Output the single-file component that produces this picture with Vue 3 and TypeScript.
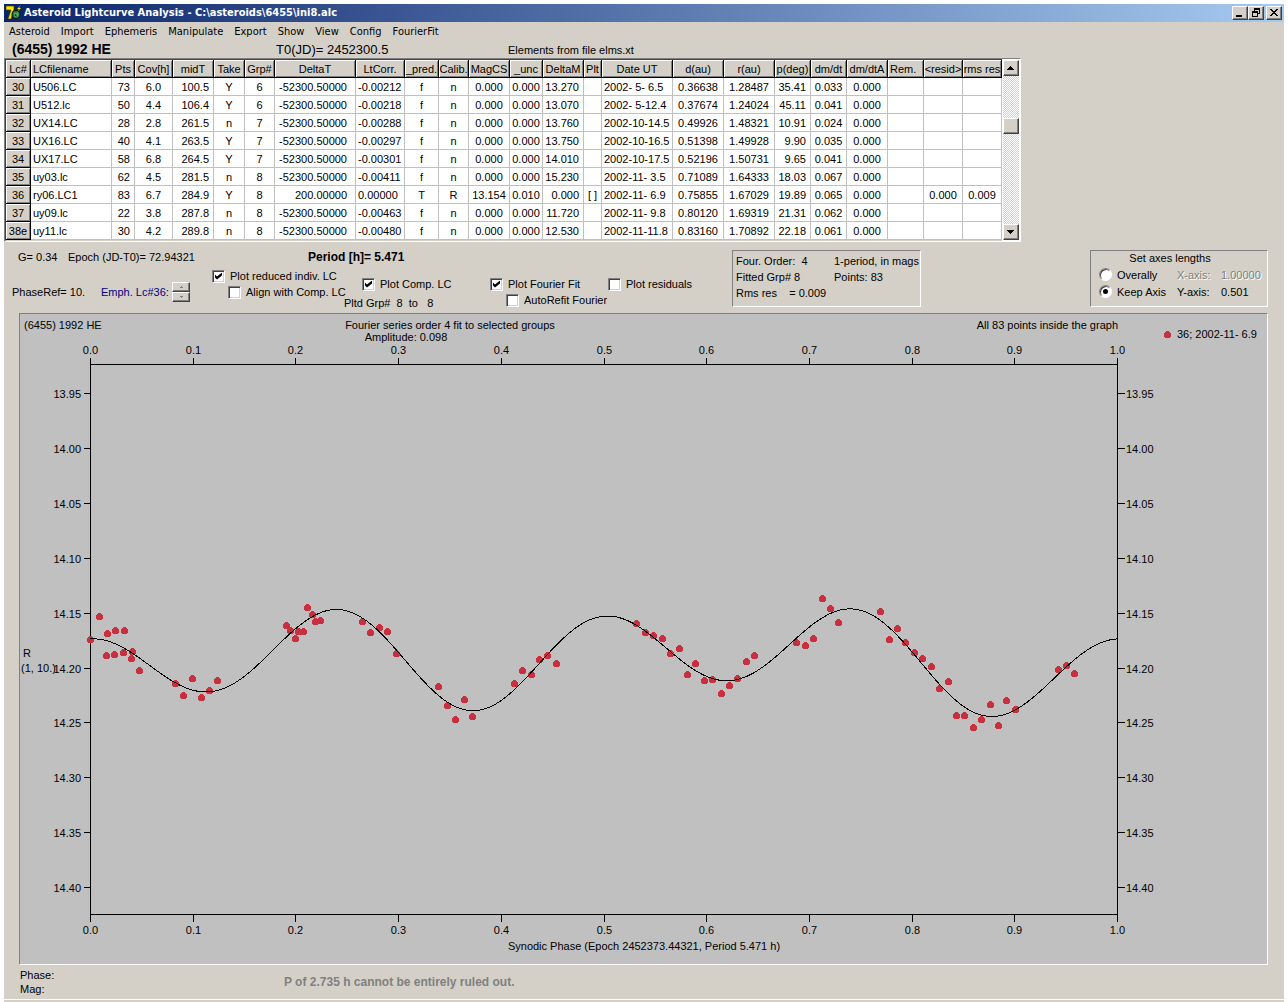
<script setup lang="ts">
import { ref } from 'vue'

interface Column {
  key: string
  title: string
  width: number
  align: string
}

const menus: string[] = ['Asteroid', 'Import', 'Ephemeris', 'Manipulate', 'Export', 'Show', 'View', 'Config', 'FourierFit']

const columns: Column[] = [
  { key: 'lc', title: 'Lc#', width: 25, align: 'center' },
  { key: 'file', title: 'LCfilename', width: 81, align: 'left' },
  { key: 'pts', title: 'Pts', width: 23, align: 'right' },
  { key: 'cov', title: 'Cov[h]', width: 38, align: 'center' },
  { key: 'mid', title: 'midT', width: 41, align: 'right' },
  { key: 'take', title: 'Take', width: 31, align: 'center' },
  { key: 'grp', title: 'Grp#', width: 30, align: 'center' },
  { key: 'dt', title: 'DeltaT', width: 81, align: 'wide' },
  { key: 'lt', title: 'LtCorr.', width: 49, align: 'lead' },
  { key: 'pred', title: '_pred.', width: 34, align: 'center' },
  { key: 'calib', title: 'Calib.', width: 30, align: 'center' },
  { key: 'magcs', title: 'MagCS', width: 41, align: 'center' },
  { key: 'unc', title: '_unc', width: 33, align: 'center' },
  { key: 'dm', title: 'DeltaM', width: 41, align: 'right' },
  { key: 'plt', title: 'Plt', width: 18, align: 'center' },
  { key: 'date', title: 'Date UT', width: 71, align: 'lead' },
  { key: 'd', title: 'd(au)', width: 51, align: 'center' },
  { key: 'r', title: 'r(au)', width: 51, align: 'center' },
  { key: 'p', title: 'p(deg)', width: 36, align: 'right' },
  { key: 'dmdt', title: 'dm/dt', width: 36, align: 'center' },
  { key: 'dmdta', title: 'dm/dtA', width: 41, align: 'center' },
  { key: 'rem', title: 'Rem.', width: 36, align: 'left' },
  { key: 'resid', title: '<resid>', width: 39, align: 'center' },
  { key: 'rms', title: 'rms res', width: 39, align: 'center' },
]

const rows: string[][] = [
  ['30', 'U506.LC', '73', '6.0', '100.5', 'Y', '6', '-52300.50000', '-0.00212', 'f', 'n', '0.000', '0.000', '13.270', '', '2002- 5- 6.5', '0.36638', '1.28487', '35.41', '0.033', '0.000', '', '', ''],
  ['31', 'U512.lc', '50', '4.4', '106.4', 'Y', '6', '-52300.50000', '-0.00218', 'f', 'n', '0.000', '0.000', '13.070', '', '2002- 5-12.4', '0.37674', '1.24024', '45.11', '0.041', '0.000', '', '', ''],
  ['32', 'UX14.LC', '28', '2.8', '261.5', 'n', '7', '-52300.50000', '-0.00288', 'f', 'n', '0.000', '0.000', '13.760', '', '2002-10-14.5', '0.49926', '1.48321', '10.91', '0.024', '0.000', '', '', ''],
  ['33', 'UX16.LC', '40', '4.1', '263.5', 'Y', '7', '-52300.50000', '-0.00297', 'f', 'n', '0.000', '0.000', '13.750', '', '2002-10-16.5', '0.51398', '1.49928', '9.90', '0.035', '0.000', '', '', ''],
  ['34', 'UX17.LC', '58', '6.8', '264.5', 'Y', '7', '-52300.50000', '-0.00301', 'f', 'n', '0.000', '0.000', '14.010', '', '2002-10-17.5', '0.52196', '1.50731', '9.65', '0.041', '0.000', '', '', ''],
  ['35', 'uy03.lc', '62', '4.5', '281.5', 'n', '8', '-52300.50000', '-0.00411', 'f', 'n', '0.000', '0.000', '15.230', '', '2002-11- 3.5', '0.71089', '1.64333', '18.03', '0.067', '0.000', '', '', ''],
  ['36', 'ry06.LC1', '83', '6.7', '284.9', 'Y', '8', '200.00000', '0.00000', 'T', 'R', '13.154', '0.010', '0.000', '[ ]', '2002-11- 6.9', '0.75855', '1.67029', '19.89', '0.065', '0.000', '', '0.000', '0.009'],
  ['37', 'uy09.lc', '22', '3.8', '287.8', 'n', '8', '-52300.50000', '-0.00463', 'f', 'n', '0.000', '0.000', '11.720', '', '2002-11- 9.8', '0.80120', '1.69319', '21.31', '0.062', '0.000', '', '', ''],
  ['38e', 'uy11.lc', '30', '4.2', '289.8', 'n', '8', '-52300.50000', '-0.00480', 'f', 'n', '0.000', '0.000', '12.530', '', '2002-11-11.8', '0.83160', '1.70892', '22.18', '0.061', '0.000', '', '', ''],
]

const plotReduced = ref(true)
const alignComp = ref(false)
const plotComp = ref(true)
const plotFit = ref(true)
const autoRefit = ref(false)
const plotResiduals = ref(false)
const axisMode = ref('keep')

// Plot frame in drawing units
const LEFT = 90.5
const RIGHT = 1117.5
const TOP = 364.5
const BOTTOM = 914.5

const phaseTicks = Array.from({ length: 11 }, (_, i) => ({
  x: Math.round(90 + i * 102.7) + 0.5,
  label: (i / 10).toFixed(1),
}))
const magTicks = Array.from({ length: 10 }, (_, i) => ({
  y: Math.round(393 + i * 54.9) + 0.5,
  label: (13.95 + i * 0.05).toFixed(2),
}))

const points: [number, number][] = [
  [99, 616], [107, 633], [115, 630], [124, 630], [90, 639], [106, 655], [114, 654], [123, 652], [132, 651], [131, 658],
  [139, 670], [175, 683], [183, 695], [192, 678], [201, 697], [209, 690], [217, 680], [286, 625], [290, 630], [295, 638],
  [298, 631], [303, 631], [307, 607], [312, 614], [315, 621], [320, 620], [362, 621], [370, 632], [379, 627], [387, 631],
  [396, 653], [438, 686], [447, 705], [455, 719], [464, 699], [472, 716], [514, 683], [522, 670], [531, 674], [539, 659],
  [547, 655], [556, 663], [636, 623], [645, 632], [653, 635], [662, 638], [670, 653], [679, 648], [687, 674], [695, 663],
  [704, 680], [712, 679], [721, 693], [729, 685], [737, 678], [746, 661], [754, 655], [796, 642], [805, 645], [813, 638],
  [822, 598], [830, 608], [838, 622], [880, 611], [889, 639], [897, 628], [905, 642], [914, 652], [922, 658], [931, 666],
  [939, 688], [948, 681], [956, 715], [964, 715], [973, 727], [981, 719], [990, 704], [998, 725], [1006, 700], [1015, 709],
  [1058, 669], [1066, 665], [1074, 673],
]

const normals: [number, number][] = [
  [90, 638.5], [107, 640], [115, 643], [130, 652], [150, 667], [165, 678], [177, 684], [190, 689], [206, 690.7], [217, 690],
  [230, 686], [245, 677], [255, 668], [267, 656], [280, 643], [290, 632], [300, 624], [310, 617], [320, 612.5], [330, 611],
  [338, 610.3], [350, 612.7], [363, 619.3], [377, 629.5], [397, 651], [413, 670], [430, 687], [447, 701], [458, 707.3],
  [473, 710.3], [487, 708], [503, 699.3], [517, 687.7], [532, 672.3], [547, 655], [563, 638.5], [583, 623], [597, 617.7],
  [608, 616.3], [620, 617.7], [636, 623.7], [653, 637], [670, 652.3], [687, 665.3], [707, 676], [727, 680.2], [747, 676.3],
  [763, 666.3], [780, 653.3], [795, 639.3], [810, 627.3], [830, 614.3], [850, 609.3], [867, 611.7], [889, 627.3],
  [897, 635.3], [914, 653.7], [931, 674.3], [940, 685], [957, 701], [973, 712.3], [992, 716.5], [1007, 713.7],
  [1020, 708], [1037, 695.3], [1058, 674], [1073, 660.7], [1090, 648.3], [1105, 640.7], [1117, 638.7],
]

function basis(phase: number): number[] {
  const out = [1]
  for (let k = 1; k <= 4; k++) {
    const a = 2 * Math.PI * k * phase
    out.push(Math.cos(a), Math.sin(a))
  }
  return out
}

// Least squares fit of a fourth order Fourier series
function fitSeries(data: [number, number][]): number[] {
  const n = 9
  const m = Array.from({ length: n }, () => new Array<number>(n + 1).fill(0))
  for (const [x, y] of data) {
    const b = basis((x - LEFT) / (RIGHT - LEFT))
    for (let i = 0; i < n; i++) {
      for (let j = 0; j < n; j++) m[i][j] += b[i] * b[j]
      m[i][n] += b[i] * y
    }
  }
  for (let i = 0; i < n; i++) {
    for (let r = 0; r < n; r++) {
      if (r === i) continue
      const f = m[r][i] / m[i][i]
      for (let c = i; c <= n; c++) m[r][c] -= f * m[i][c]
    }
  }
  return m.map((row, i) => row[n] / row[i])
}

const coeffs = fitSeries(normals)
const curve = Array.from({ length: 344 }, (_, i) => {
  const x = Math.min(LEFT + i * 3, RIGHT)
  const y = basis((x - LEFT) / (RIGHT - LEFT)).reduce((s, b, k) => s + b * coeffs[k], 0)
  return `${x},${y.toFixed(2)}`
}).join(' ')
</script>

<template>
  <div class="page">
    <main class="window">
      <header class="titlebar">
        <svg class="app-icon" viewBox="0 0 16 16" aria-hidden="true">
          <path d="M1 2h8v3L6 15H3l3-9H1z" fill="#222200" />
          <path d="M0 1h8v3L5 14H2l3-9H0z" fill="#f4e600" stroke="#404000" stroke-width=".6" />
          <circle cx="10" cy="9.500" r="4.500" fill="#111" />
          <circle cx="10" cy="9.500" r="3.500" fill="#1f7a2c" />
          <path d="M8 7l2 1 2-1 1 3-3 3-2-2z" fill="#56a860" />
          <path d="M8 10l2-1 1 3z" fill="#123f1a" />
          <path d="M15 0l-4 4h2l-2 3 4-4h-2z" fill="#f6f000" />
        </svg>
        <h1>Asteroid Lightcurve Analysis - C:\asteroids\6455\ini8.alc</h1>
        <div class="win-buttons">
          <button type="button" class="raised" aria-label="Minimize">
            <svg viewBox="0 0 12 10" shape-rendering="crispEdges"><path d="M2 7h6v2H2z" /></svg>
          </button>
          <button type="button" class="raised" aria-label="Restore">
            <svg viewBox="0 0 12 10" shape-rendering="crispEdges">
              <path d="M4 0h6v6H8V5h1V2H5v1H4z" />
              <path d="M2 3h6v6H2zM3 5v3h4V5z" fill-rule="evenodd" />
            </svg>
          </button>
          <button type="button" class="raised close" aria-label="Close">
            <svg viewBox="0 0 12 10" shape-rendering="crispEdges">
              <path d="M2 1h2v1h1v1h2V2h1V1h2v1H9v1H8v1H7v1h1v1h1v1h1v1H8V7H7V6H5v1H4v1H2V7h1V6h1V5h1V4H4V3H3V2H2z" />
            </svg>
          </button>
        </div>
      </header>

      <nav class="menu">
        <button v-for="m in menus" :key="m" type="button">{{ m }}</button>
      </nav>

      <section class="object">
        <h2>(6455) 1992 HE</h2>
        <span class="epoch">T0(JD)= 2452300.5</span>
        <span>Elements from file elms.xt</span>
      </section>

      <section class="grid-frame">
        <table>
          <colgroup>
            <col v-for="c in columns" :key="c.key" :style="{ width: c.width + 'px' }" />
          </colgroup>
          <thead>
            <tr>
              <th v-for="c in columns" :key="c.key" scope="col" :class="{ first: c.align === 'left' }">{{ c.title }}</th>
            </tr>
          </thead>
          <tbody>
            <tr v-for="row in rows" :key="row[0]">
              <template v-for="(cell, i) in row" :key="columns[i].key">
                <th v-if="i === 0" scope="row">{{ cell }}</th>
                <td v-else :class="columns[i].align">{{ cell }}</td>
              </template>
            </tr>
          </tbody>
        </table>
        <div class="scrollbar">
          <button type="button" class="raised" aria-label="Scroll up">
            <svg viewBox="0 0 12 12" shape-rendering="crispEdges"><path d="M5 4h1v1h1v1h1v1h1v1H2V7h1V6h1V5h1z" /></svg>
          </button>
          <div class="track"><div class="thumb raised"></div></div>
          <button type="button" class="raised" aria-label="Scroll down">
            <svg viewBox="0 0 12 12" shape-rendering="crispEdges"><path d="M2 4h7v1H8v1H7v1H6v1H5V7H4V6H3V5H2z" /></svg>
          </button>
        </div>
      </section>

      <section class="controls">
        <div class="settings">
          <div class="values">
            <span class="g">G= 0.34</span>
            <span class="jd">Epoch (JD-T0)= 72.94321</span>
            <strong>Period [h]= 5.471</strong>
          </div>
          <div class="options">
            <div class="phase">
              <span class="ref">PhaseRef= 10.</span>
              <span class="emph">Emph. Lc#36:</span>
              <span class="spinner">
                <button type="button" class="raised" aria-label="Next lightcurve">
                  <svg viewBox="0 0 5 3" shape-rendering="crispEdges"><path d="M2 0h1v1h1v1H1V1h1z" /></svg>
                </button>
                <button type="button" class="raised" aria-label="Previous lightcurve">
                  <svg viewBox="0 0 5 3" shape-rendering="crispEdges"><path d="M1 0h3v1H3v1H2V1H1z" /></svg>
                </button>
              </span>
            </div>
            <div class="group indiv">
              <label><input v-model="plotReduced" type="checkbox" />Plot reduced indiv. LC</label>
              <label class="sub"><input v-model="alignComp" type="checkbox" />Align with Comp. LC</label>
            </div>
            <div class="group lower comp">
              <label><input v-model="plotComp" type="checkbox" />Plot Comp. LC</label>
              <span class="plotted">Pltd Grp#&nbsp; 8&nbsp; to&nbsp;&nbsp; 8</span>
            </div>
            <div class="group lower fourier">
              <label><input v-model="plotFit" type="checkbox" />Plot Fourier Fit</label>
              <label class="sub"><input v-model="autoRefit" type="checkbox" />AutoRefit Fourier</label>
            </div>
            <div class="group lower">
              <label><input v-model="plotResiduals" type="checkbox" />Plot residuals</label>
            </div>
          </div>
        </div>

        <div class="panel fit">
          <span>Four. Order:&nbsp; 4</span><span>1-period, in mags</span>
          <span>Fitted Grp# 8</span><span>Points: 83</span>
          <span>Rms res&nbsp;&nbsp;&nbsp; = 0.009</span>
        </div>

        <fieldset class="panel axes">
          <div class="caption" id="axes-caption">Set axes lengths</div>
          <div class="axis-grid" role="radiogroup" aria-labelledby="axes-caption">
            <label><input v-model="axisMode" type="radio" name="axis" value="overall" />Overally</label>
            <span class="off">X-axis:</span><span class="off">1.00000</span>
            <label><input v-model="axisMode" type="radio" name="axis" value="keep" />Keep Axis</label>
            <span>Y-axis:</span><span>0.501</span>
          </div>
        </fieldset>
      </section>

      <section class="chart">
        <svg viewBox="20 314 1247 650" role="img" aria-label="Composite lightcurve">
          <g class="lines" shape-rendering="crispEdges">
            <rect :x="LEFT" :y="TOP" :width="RIGHT - LEFT" :height="BOTTOM - TOP" />
            <template v-for="t in phaseTicks" :key="t.label">
              <line :x1="t.x" :x2="t.x" :y1="TOP - 7" :y2="TOP" />
              <line :x1="t.x" :x2="t.x" :y1="BOTTOM" :y2="BOTTOM + 7" />
            </template>
            <template v-for="t in magTicks" :key="t.label">
              <line :x1="LEFT - 7" :x2="LEFT" :y1="t.y" :y2="t.y" />
              <line :x1="RIGHT" :x2="RIGHT + 7" :y1="t.y" :y2="t.y" />
            </template>
          </g>
          <g class="dots" shape-rendering="crispEdges">
            <circle v-for="([x, y], i) in points" :key="i" :cx="x + 0.5" :cy="y + 0.5" r="3.5" />
            <circle cx="1167.5" cy="334.5" r="3.5" />
          </g>
          <polyline class="fit-curve" shape-rendering="crispEdges" :points="curve" />
          <g class="middle">
            <template v-for="t in phaseTicks" :key="t.label">
              <text :x="t.x" y="354">{{ t.label }}</text>
              <text :x="t.x" y="934">{{ t.label }}</text>
            </template>
            <text x="450" y="329">Fourier series order 4 fit to selected groups</text>
            <text x="406" y="341">Amplitude: 0.098</text>
            <text x="644" y="950">Synodic Phase (Epoch 2452373.44321, Period 5.471 h)</text>
          </g>
          <g class="end">
            <text v-for="t in magTicks" :key="t.label" x="81" :y="t.y + 4">{{ t.label }}</text>
            <text x="1118" y="329">All 83 points inside the graph</text>
          </g>
          <text v-for="t in magTicks" :key="t.label" x="1126" :y="t.y + 4">{{ t.label }}</text>
          <text x="24" y="329">(6455) 1992 HE</text>
          <text x="1177" y="338">36; 2002-11- 6.9</text>
          <text x="23" y="657">R</text>
          <text x="21" y="672">(1, 10.)</text>
        </svg>
      </section>

      <footer>
        <div class="cursor"><span>Phase:</span><span>Mag:</span></div>
        <strong>P of 2.735 h cannot be entirely ruled out.</strong>
      </footer>
    </main>
  </div>
</template>

<style>
body {
  margin: 0;
  background: #fff;
}
</style>

<style scoped>
.page {
  padding: 4px 4px 0;
  font: 11px/14px "Liberation Sans", Arial, sans-serif;
  color: #000;
}
.window {
  background: #d4d0c8;
  border-bottom: 2px solid #d4d0c8;
}
button {
  margin: 0;
  padding: 0;
  border: 0;
  background: #d4d0c8;
  font: inherit;
  color: inherit;
}
svg {
  display: block;
}
.raised {
  box-sizing: border-box;
  border: 1px solid;
  border-color: #fff #404040 #404040 #fff;
  box-shadow: inset -1px -1px #808080;
  background: #d4d0c8;
}
.titlebar {
  display: flex;
  align-items: center;
  height: 18px;
  padding: 0 2px;
  background: linear-gradient(to right, #0a246a, #a6caf0);
}
.app-icon {
  width: 16px;
  height: 16px;
}
h1 {
  flex: 1;
  margin: 0 0 0 2px;
  font: bold 11px/18px "DejaVu Sans Condensed", "DejaVu Sans", sans-serif;
  color: #fff;
  white-space: nowrap;
}
.win-buttons {
  display: flex;
}
.win-buttons button {
  width: 16px;
  height: 14px;
}
.win-buttons svg {
  width: 12px;
  height: 10px;
  margin: 1px;
}
.win-buttons .close {
  margin-left: 2px;
}
.menu {
  display: flex;
  gap: 11px;
  height: 19px;
  padding-left: 5px;
  font: 11px/20px "DejaVu Sans Condensed", "DejaVu Sans", sans-serif;
}
.object {
  display: flex;
  align-items: center;
  height: 17px;
  padding-left: 8px;
  white-space: nowrap;
}
h2 {
  width: 264px;
  margin: 0;
  font-size: 14px;
  line-height: 17px;
}
.epoch {
  width: 232px;
  font-size: 13px;
}
.grid-frame {
  display: flex;
  width: fit-content;
  border: 1px solid;
  border-color: #808080 #fff #fff #808080;
  background: #fff;
}
table {
  width: 997px;
  table-layout: fixed;
  border-collapse: separate;
  border-spacing: 0;
  border-top: 1px solid #404040;
  border-left: 1px solid #404040;
  border-bottom: 1px solid #d4d0c8;
}
th,
td {
  box-sizing: border-box;
  height: 18px;
  padding: 0;
  border-right: 1px solid #c0c0c0;
  border-bottom: 1px solid #c0c0c0;
  font-weight: normal;
  line-height: 16px;
  text-align: center;
  white-space: nowrap;
  overflow: hidden;
}
th {
  border-color: #000;
  background: #d4d0c8;
  box-shadow: inset 1px 1px #fff, inset -1px -1px #808080;
}
th.first,
td.left,
td.lead {
  padding-left: 2px;
  text-align: left;
}
td.right {
  padding-right: 4px;
  text-align: right;
}
td.wide {
  padding-right: 8px;
  text-align: right;
}
.scrollbar {
  display: flex;
  flex-direction: column;
  width: 16px;
  margin: 1px;
}
.scrollbar button {
  width: 16px;
  height: 16px;
}
.scrollbar svg {
  width: 12px;
  height: 12px;
  margin: 1px;
}
.track {
  flex: 1;
  padding-top: 42px;
  background: repeating-conic-gradient(#fff 0 25%, #d4d0c8 0 50%) 0 0 / 2px 2px;
}
.thumb {
  height: 16px;
}
.controls {
  display: flex;
  padding: 8px 16px 3px 8px;
  white-space: nowrap;
}
.settings {
  width: 720px;
}
.values {
  display: flex;
  height: 18px;
  padding-left: 6px;
}
.g {
  width: 50px;
}
.jd {
  width: 240px;
}
strong {
  font-size: 12px;
}
.options {
  display: flex;
  align-items: flex-start;
}
.phase {
  display: flex;
  align-items: center;
  width: 200px;
  padding-top: 14px;
}
.ref {
  width: 89px;
}
.emph {
  width: 71px;
  color: #000080;
}
.spinner {
  display: flex;
  flex-direction: column;
  width: 18px;
}
.spinner button {
  display: flex;
  align-items: center;
  justify-content: center;
  height: 10px;
}
.spinner svg {
  width: 5px;
  height: 3px;
  fill: #808080;
}
.group {
  display: flex;
  flex-direction: column;
}
.lower {
  padding-top: 8px;
}
.indiv {
  width: 132px;
}
.comp {
  width: 146px;
}
.fourier {
  width: 118px;
}
label {
  display: flex;
  align-items: center;
  height: 16px;
}
.sub {
  padding-left: 16px;
}
.comp label {
  padding-left: 18px;
}
.plotted {
  margin-top: 4px;
}
input {
  appearance: none;
  flex: none;
  width: 13px;
  height: 13px;
  margin: 0 5px 0 0;
}
input[type='checkbox'] {
  border: 1px solid;
  border-color: #808080 #fff #fff #808080;
  box-shadow: inset 1px 1px #404040, inset -1px -1px #d4d0c8;
  background: #fff;
}
input[type='checkbox']:checked::before {
  content: '';
  display: block;
  width: 7px;
  height: 7px;
  margin: 2px;
  background: #000;
  clip-path: polygon(0 28%, 28% 57%, 100% 0, 100% 43%, 28% 100%, 0 72%);
}
input[type='radio'] {
  border: 1px solid;
  border-color: #808080 #fff #fff #808080;
  border-radius: 50%;
  box-shadow: inset 1px 1px #404040;
  background: #fff;
}
input[type='radio']:checked::before {
  content: '';
  display: block;
  width: 5px;
  height: 5px;
  margin: 3px;
  border-radius: 50%;
  background: #000;
}
.panel {
  box-sizing: border-box;
  height: 57px;
  margin: 0;
  border: 1px solid;
  border-color: #808080 #fff #fff #808080;
}
.fit {
  display: grid;
  grid-template-columns: 98px auto;
  grid-auto-rows: 16px;
  align-content: start;
  width: 189px;
  padding: 3px;
}
.axes {
  width: 178px;
  min-width: 0;
  margin-left: auto;
  padding: 0 8px;
}
.caption {
  text-align: center;
  padding-right: 18px;
}
.axis-grid {
  display: grid;
  grid-template-columns: 78px 44px auto;
  grid-auto-rows: 17px;
  align-items: center;
  padding-top: 1px;
}
.off {
  color: #808080;
  text-shadow: 1px 1px #fff;
}
.chart {
  margin: 0 16px 0 15px;
  border: 1px solid;
  border-color: #808080 #fff #fff #808080;
  background: #c0c0c0;
}
.chart svg {
  width: 100%;
  height: auto;
}
.lines {
  fill: none;
  stroke: #000;
}
.dots {
  fill: #c83040;
}
.fit-curve {
  fill: none;
  stroke: #000;
}
.middle {
  text-anchor: middle;
}
.end {
  text-anchor: end;
}
footer {
  display: flex;
  align-items: center;
  height: 34px;
  padding-left: 16px;
  border-bottom: 1px solid #fff;
}
.cursor {
  display: flex;
  flex-direction: column;
  width: 264px;
}
footer strong {
  color: #808080;
}
</style>
